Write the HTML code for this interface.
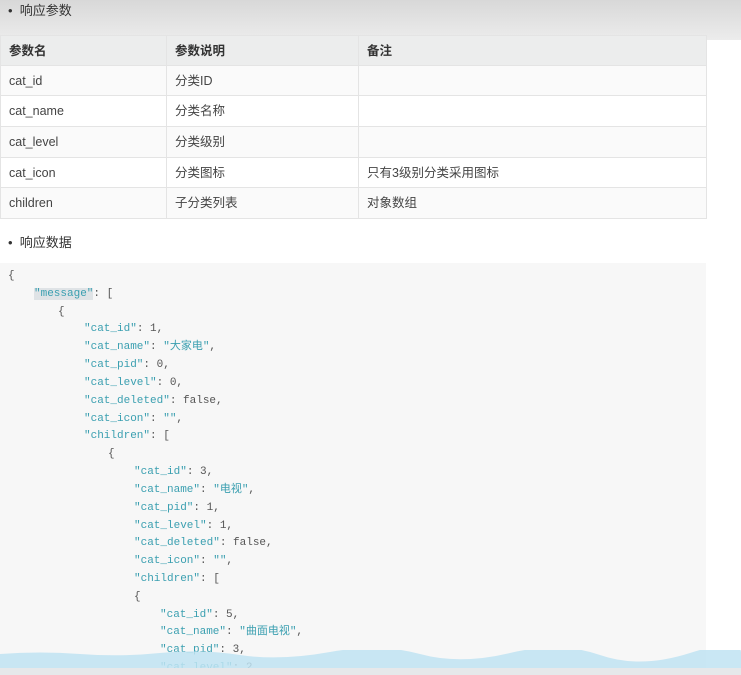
<!DOCTYPE html>
<html><head><meta charset="utf-8"><style>
body{margin:0;width:741px;height:675px;overflow:hidden;background:#fff;font-family:"Liberation Sans","Noto Sans CJK SC",sans-serif;position:relative}
.top{position:absolute;left:0;top:0;width:741px;height:40px;background:linear-gradient(#d8d8d8,#ececec)}
.b{position:absolute;font-size:13px;color:#333;line-height:20px}
table{position:absolute;left:0;top:35px;width:707px;border-collapse:collapse;font-size:12.5px;color:#444;line-height:14px}
td,th{border:1px solid #e4e4e4;padding:0 8px;text-align:left;box-sizing:border-box}
th{background:#eceded;font-weight:bold;color:#333}
tr:nth-child(even) td{background:#fafafa}
.code{position:absolute;left:0;top:263px;width:706px;height:412px;background:#f7f7f7;font-family:"Liberation Mono","Noto Sans CJK SC",monospace;font-size:11px;color:#555}
.l{position:absolute;white-space:pre;line-height:14px;height:14px}
.k{color:#3a9fb0}.s{color:#3a9fb0}
.wave{position:absolute;left:0;top:650px;width:741px;height:18px}
.bot{position:absolute;left:0;top:668px;width:741px;height:7px;background:#e6e8ea}
</style></head><body>
<div class="top"></div>
<div class="b" style="left:8px;top:1px">•&nbsp; 响应参数</div>
<table>
<tr style="height:30px"><th style="width:166px">参数名</th><th style="width:192px">参数说明</th><th>备注</th></tr>
<tr style="height:30px"><td>cat_id</td><td>分类ID</td><td></td></tr>
<tr style="height:31px"><td>cat_name</td><td>分类名称</td><td></td></tr>
<tr style="height:31px"><td>cat_level</td><td>分类级别</td><td></td></tr>
<tr style="height:30px"><td>cat_icon</td><td>分类图标</td><td>只有3级别分类采用图标</td></tr>
<tr style="height:31px"><td>children</td><td>子分类列表</td><td>对象数组</td></tr>
</table>
<div class="b" style="left:8px;top:233px">•&nbsp; 响应数据</div>
<div class="code">
<div class="l" style="left:8px;top:6px">{</div>
<div class="l" style="left:34px;top:24px"><span class="k" style="background:#dfe3e6">"message"</span>: [</div>
<div class="l" style="left:58px;top:42px">{</div>
<div class="l" style="left:84px;top:59px"><span class="k">"cat_id"</span>: 1,</div>
<div class="l" style="left:84px;top:77px"><span class="k">"cat_name"</span>: <span class="s">"大家电"</span>,</div>
<div class="l" style="left:84px;top:95px"><span class="k">"cat_pid"</span>: 0,</div>
<div class="l" style="left:84px;top:113px"><span class="k">"cat_level"</span>: 0,</div>
<div class="l" style="left:84px;top:131px"><span class="k">"cat_deleted"</span>: false,</div>
<div class="l" style="left:84px;top:149px"><span class="k">"cat_icon"</span>: <span class="s">""</span>,</div>
<div class="l" style="left:84px;top:166px"><span class="k">"children"</span>: [</div>
<div class="l" style="left:108px;top:184px">{</div>
<div class="l" style="left:134px;top:202px"><span class="k">"cat_id"</span>: 3,</div>
<div class="l" style="left:134px;top:220px"><span class="k">"cat_name"</span>: <span class="s">"电视"</span>,</div>
<div class="l" style="left:134px;top:238px"><span class="k">"cat_pid"</span>: 1,</div>
<div class="l" style="left:134px;top:256px"><span class="k">"cat_level"</span>: 1,</div>
<div class="l" style="left:134px;top:273px"><span class="k">"cat_deleted"</span>: false,</div>
<div class="l" style="left:134px;top:291px"><span class="k">"cat_icon"</span>: <span class="s">""</span>,</div>
<div class="l" style="left:134px;top:309px"><span class="k">"children"</span>: [</div>
<div class="l" style="left:134px;top:327px">{</div>
<div class="l" style="left:160px;top:345px"><span class="k">"cat_id"</span>: 5,</div>
<div class="l" style="left:160px;top:362px"><span class="k">"cat_name"</span>: <span class="s">"曲面电视"</span>,</div>
<div class="l" style="left:160px;top:380px"><span class="k">"cat_pid"</span>: 3,</div>
<div class="l" style="left:160px;top:398px"><span class="k">"cat_level"</span>: 2,</div>
</div>
<svg class="wave" viewBox="0 0 741 18" preserveAspectRatio="none"><path d="M0 4 Q40 1 80 4 T160 3 T240 5 T330 2 T420 4 T510 3 T600 5 T690 3 T741 2 V18 H0Z" fill="#bfe3f2" opacity=".85"/></svg>
<div class="bot"></div>
</body></html>
